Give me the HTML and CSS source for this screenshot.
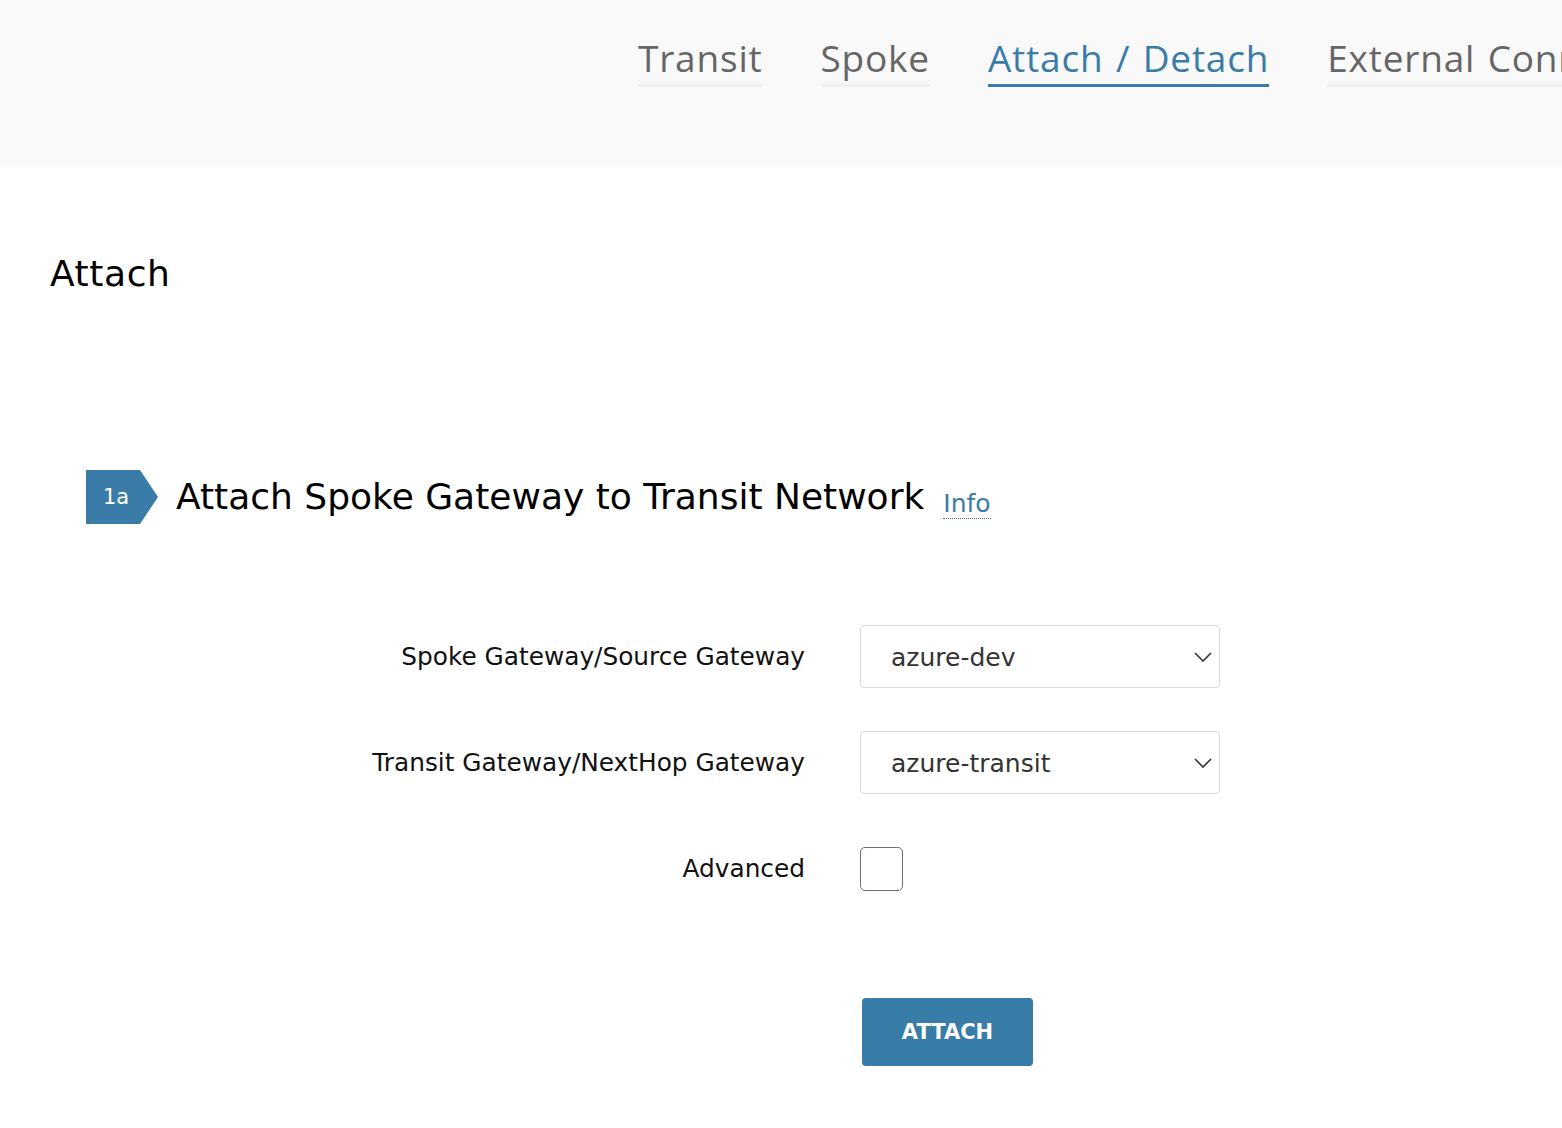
FILE: index.html
```html
<!DOCTYPE html>
<html lang="en">
<head>
<meta charset="utf-8">
<title>Attach / Detach</title>
<link rel="stylesheet" href="styles.css">
</head>
<body>
<header class="topbar">
  <nav class="tabs">
    <a class="tab">Transit</a>
    <a class="tab">Spoke</a>
    <a class="tab active">Attach / Detach</a>
    <a class="tab">External Connection</a>
  </nav>
</header>
<main class="content">
  <h2 class="page-title">Attach</h2>
  <section class="step">
    <div class="step-head">
      <div class="step-badge">1a</div>
      <h3 class="step-title">Attach Spoke Gateway to Transit Network</h3>
      <a class="info-link">Info</a>
    </div>
    <form class="form">
      <label class="form-label">Spoke Gateway/Source Gateway</label>
      <div class="select">
        <span class="select-value">azure-dev</span>
        <svg class="chevron" width="18" height="10" viewBox="0 0 18 10"><path d="M1 1 L9 9 L17 1" fill="none" stroke="#333" stroke-width="1.6"/></svg>
      </div>
      <label class="form-label">Transit Gateway/NextHop Gateway</label>
      <div class="select">
        <span class="select-value">azure-transit</span>
        <svg class="chevron" width="18" height="10" viewBox="0 0 18 10"><path d="M1 1 L9 9 L17 1" fill="none" stroke="#333" stroke-width="1.6"/></svg>
      </div>
      <label class="form-label">Advanced</label>
      <div class="check-cell"><span class="checkbox"></span></div>
      <div class="actions">
        <button type="button" class="btn-primary">ATTACH</button>
      </div>
    </form>
  </section>
</main>
</body>
</html>
```
FILE: styles.css
```css
html, body {
  margin: 0;
  padding: 0;
  background: #fff;
  overflow: hidden;
}
body {
  font-family: "DejaVu Sans", "Open Sans", sans-serif;
  color: #000;
  width: 1562px;
  height: 1128px;
}
.topbar {
  background: #f9f9f9;
  height: 166px;
  overflow: hidden;
}
.tabs {
  display: flex;
  gap: 58px;
  padding-left: 638px;
  padding-top: 34px;
  white-space: nowrap;
}
.tab {
  font-family: "Open Sans", "DejaVu Sans", sans-serif;
  font-size: 37px;
  line-height: 48px;
  color: #666;
  border-bottom: 3px solid #f0f0f0;
  padding-bottom: 2px;
  letter-spacing: 0.8px;
  word-spacing: 2px;
}
.tab.active {
  color: #3a7ca8;
  border-bottom-color: #3a7ca8;
}
.content {
  padding: 0;
}
.page-title {
  margin: 0;
  padding: 84px 0 0 50px;
  font-weight: 400;
  font-size: 36px;
  line-height: 48px;
  letter-spacing: 0.6px;
}
.step {
  padding-top: 172px;
}
.step-head {
  display: flex;
  align-items: center;
  padding-left: 86px;
  height: 54px;
}
.step-badge {
  width: 72px;
  height: 54px;
  background: #3a7ca8;
  clip-path: polygon(0 0, 54px 0, 72px 50%, 54px 100%, 0 100%);
  color: #fff;
  font-size: 21px;
  line-height: 54px;
  box-sizing: border-box;
  padding-left: 17px;
}
.step-title {
  margin: 0 0 0 18px;
  font-weight: 400;
  font-size: 36px;
  line-height: 54px;
}
.info-link {
  margin-left: 19px;
  margin-top: 14px;
  font-size: 25px;
  line-height: 29px;
  color: #3a7ca8;
  border-bottom: 1px dotted #3a7ca8;
}
.form {
  display: grid;
  grid-template-columns: 805px 360px;
  grid-auto-rows: 63px;
  column-gap: 55px;
  row-gap: 43px;
  margin-top: 101px;
}
.form-label {
  text-align: right;
  align-self: center;
  font-size: 24.8px;
  color: #111;
}
.select {
  box-sizing: border-box;
  border: 1px solid #d9d9d9;
  border-radius: 4px;
  display: flex;
  align-items: center;
  justify-content: space-between;
  padding: 0 7px 0 30px;
  background: #fff;
}
.select-value {
  font-size: 25px;
  color: #333;
  padding-top: 1px;
}
.check-cell {
  display: flex;
  align-items: center;
}
.checkbox {
  width: 43px;
  height: 44px;
  box-sizing: border-box;
  border: 1px solid #6b6f76;
  border-radius: 5px;
}
.actions {
  grid-column: 2;
  margin-top: 55px;
}
.btn-primary {
  margin-left: 2px;
  width: 171px;
  height: 68px;
  border: 0;
  border-radius: 4px;
  background: #387da8;
  color: #fff;
  font-family: inherit;
  font-weight: 700;
  font-size: 21px;
  letter-spacing: 0;
}
```
